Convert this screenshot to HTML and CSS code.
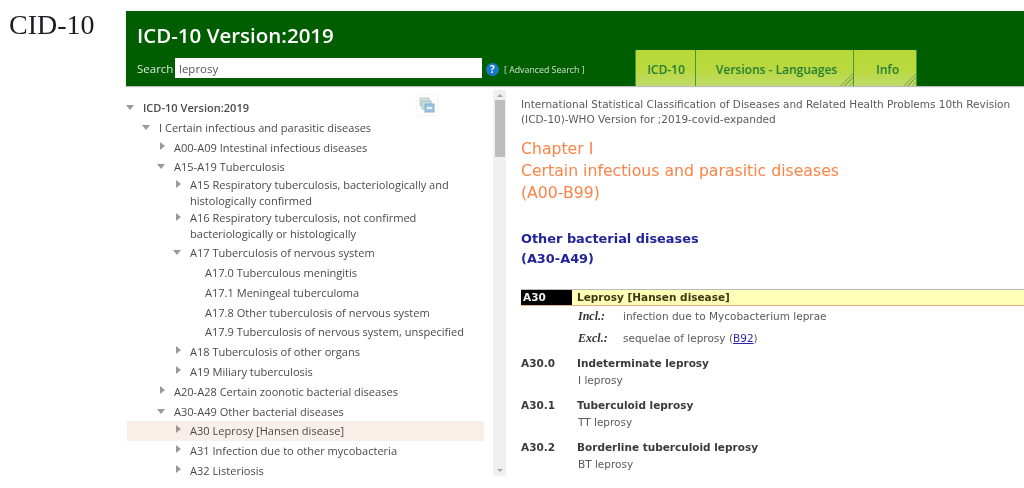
FILE: index.html
```html
<!DOCTYPE html>
<html lang="en">
<head>
  <meta charset="UTF-8" />
  <title>CID-10</title>
  <link rel="stylesheet" href="styles.css">
</head>
<body>
  <div class="page">
    <div class="page-label">CID-10</div>

    <div class="browser">
      <!-- Green header -->
      <div class="header">
        <h1>ICD-10 Version:2019</h1>
        <div class="header-bar">
          <div class="search">
            <label>Search</label>
            <input type="text" value="leprosy" />
            <span class="help">?</span>
            <a class="advanced">[ Advanced Search ]</a>
          </div>
          <div class="tabs">
            <a class="tab tab-icd">ICD-10</a>
            <a class="tab tab-versions">Versions - Languages</a>
            <a class="tab tab-info">Info</a>
          </div>
        </div>
      </div>

      <div class="panes">
        <!-- Tree -->
        <div class="tree">
          <div class="tree-copy">
            <svg width="20" height="20" viewBox="0 0 20 20">
              <rect x="3" y="3" width="9" height="8" fill="#d3e4d8" stroke="#b4cbc2" />
              <rect x="5" y="6" width="9" height="8" fill="#c6dde4" stroke="#a6c2d0" />
              <rect x="8" y="9" width="9" height="8" fill="#9cc6e4" stroke="#8aaac4" />
              <rect x="10" y="12" width="5" height="2" fill="#e8f2f8" />
            </svg>
          </div>
          <div class="row lvl-0 open"><i></i><span class="row-bold">ICD-10 Version:2019</span></div>
          <div class="row lvl-1 open"><i></i>I Certain infectious and parasitic diseases</div>
          <div class="row lvl-2 closed"><i></i>A00-A09 Intestinal infectious diseases</div>
          <div class="row lvl-2 open"><i></i>A15-A19 Tuberculosis</div>
          <div class="row lvl-3 closed wrap"><i></i>A15 Respiratory tuberculosis, bacteriologically and histologically confirmed</div>
          <div class="row lvl-3 closed wrap"><i></i>A16 Respiratory tuberculosis, not confirmed bacteriologically or histologically</div>
          <div class="row lvl-3 open"><i></i>A17 Tuberculosis of nervous system</div>
          <div class="row lvl-4">A17.0 Tuberculous meningitis</div>
          <div class="row lvl-4">A17.1 Meningeal tuberculoma</div>
          <div class="row lvl-4">A17.8 Other tuberculosis of nervous system</div>
          <div class="row lvl-4">A17.9 Tuberculosis of nervous system, unspecified</div>
          <div class="row lvl-3 closed"><i></i>A18 Tuberculosis of other organs</div>
          <div class="row lvl-3 closed"><i></i>A19 Miliary tuberculosis</div>
          <div class="row lvl-2 closed"><i></i>A20-A28 Certain zoonotic bacterial diseases</div>
          <div class="row lvl-2 open"><i></i>A30-A49 Other bacterial diseases</div>
          <div class="row lvl-3 closed selected"><i></i>A30 Leprosy [Hansen disease]</div>
          <div class="row lvl-3 closed"><i></i>A31 Infection due to other mycobacteria</div>
          <div class="row lvl-3 closed"><i></i>A32 Listeriosis</div>
        </div>

        <div class="scrollbar">
          <div class="scroll-up"></div>
          <div class="scroll-thumb"></div>
          <div class="scroll-down"></div>
        </div>

        <!-- Content -->
        <div class="content">
          <p class="intro">International Statistical Classification of Diseases and Related Health Problems 10th Revision (ICD-10)-WHO Version for ;2019-covid-expanded</p>
          <h2 class="chapter">Chapter I<br>Certain infectious and parasitic diseases<br>(A00-B99)</h2>
          <h3 class="block">Other bacterial diseases<br>(A30-A49)</h3>

          <div class="category">
            <div class="cat-code">A30</div>
            <div class="cat-title">Leprosy [Hansen disease]</div>
          </div>
          <div class="note"><b>Incl.:</b><span>infection due to Mycobacterium leprae</span></div>
          <div class="note"><b>Excl.:</b><span>sequelae of leprosy (<a href="#">B92</a>)</span></div>

          <div class="sub">
            <div class="sub-code">A30.0</div>
            <div class="sub-title">Indeterminate leprosy</div>
            <div class="sub-text">I leprosy</div>
          </div>
          <div class="sub">
            <div class="sub-code">A30.1</div>
            <div class="sub-title">Tuberculoid leprosy</div>
            <div class="sub-text">TT leprosy</div>
          </div>
          <div class="sub">
            <div class="sub-code">A30.2</div>
            <div class="sub-title">Borderline tuberculoid leprosy</div>
            <div class="sub-text">BT leprosy</div>
          </div>
        </div>
      </div>
    </div>
  </div>
</body>
</html>
```

FILE: styles.css
```css
* {
  margin: 0;
  padding: 0;
  box-sizing: border-box;
}

html, body {
  height: 100%;
  overflow: hidden;
  background: white;
}

.page {
  display: flex;
  height: 488px;
  filter: blur(0.45px);
}

.page-label {
  width: 126px;
  flex-shrink: 0;
  padding: 9px 0 0 9px;
  font-family: "Liberation Serif", serif;
  font-size: 28px;
  line-height: 32px;
  color: #1c1c24;
}

.browser {
  flex: 1;
  min-width: 0;
  padding-top: 11px;
}

/* Header */
.header {
  height: 75px;
  background: #005e00;
  padding: 10px 0 0 11px;
  box-shadow: 0 1px 1px #bbb;
  font-family: "Open Sans", sans-serif;
}

.header h1 {
  font-size: 20.5px;
  line-height: 28px;
  font-weight: 600;
  color: white;
}

.header-bar {
  display: flex;
  margin-top: 1px;
}

.search {
  display: flex;
  align-items: center;
  width: 498px;
  height: 36px;
  color: #d8e8d8;
  font-size: 11.5px;
}

.search label {
  width: 38px;
  flex-shrink: 0;
}

.search input {
  width: 307px;
  height: 20px;
  border: none;
  padding-left: 4px;
  font-family: "Open Sans", sans-serif;
  font-size: 11.5px;
  color: #555;
}

.help {
  width: 13px;
  height: 13px;
  margin: 3px 0 0 4px;
  border-radius: 50%;
  background: #1a78c8;
  color: white;
  font-size: 10px;
  font-weight: bold;
  line-height: 13px;
  text-align: center;
}

.advanced {
  margin: 3px 0 0 5px;
  font-size: 8.8px;
  color: #cfe0cf;
  white-space: nowrap;
}

.tabs {
  display: flex;
  height: 36px;
}

.tab {
  position: relative;
  display: flex;
  align-items: center;
  justify-content: center;
  padding-top: 2px;
  font-size: 12px;
  font-weight: 600;
  color: #1f8038;
  background: linear-gradient(#b8d838 0%, #b9d93e 55%, #c0db6a 100%);
  border-right: 1px solid #3e9a3a;
}

.tab-icd {
  width: 61px;
  padding-left: 1px;
  border-left: 1px solid #3e9a3a;
}

.tab-versions {
  width: 158px;
  padding-left: 4px;
}

.tab-info {
  width: 63px;
  padding-left: 5px;
}

/* folded corner hatch on the tabs */
.tab-versions::after, .tab-info::after {
  content: "";
  position: absolute;
  right: 0;
  bottom: 0;
  width: 13px;
  height: 13px;
  background: repeating-linear-gradient(135deg, #8fae4c 0 1px, transparent 1px 3px);
  clip-path: polygon(100% 0, 100% 100%, 0 100%);
}

/* Panes */
.panes {
  display: flex;
  height: 392px;
  padding-top: 4px;
}

.tree {
  position: relative;
  width: 366px;
  flex-shrink: 0;
  height: 388px;
  padding: 8px 0 0 1px;
  overflow: hidden;
  font-family: "Open Sans", sans-serif;
  font-size: 11.05px;
  color: #4a4a4a;
}

.tree-copy {
  position: absolute;
  top: 5px;
  left: 291px;
  width: 20px;
  height: 20px;
  box-shadow: 0 0 2px #e4e4e4;
}

.row {
  position: relative;
  width: 357px;
  height: 19.8px;
  line-height: 19.8px;
  white-space: nowrap;
}

.row-bold {
  font-weight: 600;
}

.row.wrap {
  height: 33px;
  padding-right: 30px;
  line-height: 16px;
  white-space: normal;
}

.row.selected {
  background: #f8efe8;
}

.row i {
  position: absolute;
  width: 0;
  height: 0;
  margin-top: 4px;
  border-style: solid;
  border-color: transparent;
}

.row.wrap i {
  margin-top: 3px;
}

.row.closed i {
  margin-left: -14px;
  border-width: 4px 0 4px 5px;
  border-left-color: #999;
}

.row.open i {
  margin-left: -17px;
  margin-top: 7px;
  border-width: 5px 4px 0 4px;
  border-top-color: #999;
}

.lvl-0 { padding-left: 16px; }
.lvl-1 { padding-left: 32px; }
.lvl-2 { padding-left: 47px; }
.lvl-3 { padding-left: 63px; }
.lvl-4 { padding-left: 78px; }

.scrollbar {
  display: flex;
  flex-direction: column;
  align-items: center;
  width: 13px;
  flex-shrink: 0;
  height: 386px;
  margin-left: 1px;
  background: #f0f0f0;
}

.scroll-up {
  margin: 4px 0 3px;
  border-style: solid;
  border-width: 0 3px 3px 3px;
  border-color: transparent transparent #a8a8a8 transparent;
}

.scroll-thumb {
  width: 10px;
  height: 57px;
  background: #bdbdbd;
}

.scroll-down {
  margin-top: auto;
  margin-bottom: 4px;
  border-style: solid;
  border-width: 3px 3px 0 3px;
  border-color: #a8a8a8 transparent transparent transparent;
}

/* Content */
.content {
  flex: 1;
  min-width: 0;
  padding: 7px 0 0 15px;
  overflow: hidden;
  font-family: "DejaVu Sans", sans-serif;
  font-size: 10.5px;
  color: #5a5a5a;
}

.intro {
  padding-right: 6px;
  line-height: 15px;
}

.chapter {
  margin-top: 11px;
  font-size: 15.7px;
  font-weight: normal;
  line-height: 21.8px;
  color: #fa8446;
}

.block {
  margin-top: 26px;
  font-size: 12.9px;
  font-weight: bold;
  line-height: 20px;
  color: #23239a;
}

.category {
  display: flex;
  height: 17px;
  margin-top: 20px;
  border-top: 1px solid #bbb;
  border-bottom: 1px solid #e0b080;
  font-weight: bold;
  line-height: 14px;
}

.cat-code {
  width: 51px;
  padding-left: 2px;
  background: black;
  color: #eee;
}

.cat-title {
  flex: 1;
  padding-left: 5px;
  background: #ffffb8;
  color: #3a3a10;
}

.note {
  display: flex;
  height: 22px;
  padding-left: 57px;
  line-height: 21px;
}

.note b {
  width: 45px;
  font-family: "Liberation Serif", serif;
  font-size: 12px;
  font-style: italic;
  color: #333;
}

.note a {
  color: #2a2aa8;
}

.sub {
  display: grid;
  grid-template-columns: 56px 1fr;
  margin-top: 5px;
  margin-bottom: 8px;
  line-height: 17px;
}

.sub-code, .sub-title {
  font-weight: bold;
  color: #3a3a3a;
}

.sub-text {
  grid-column: 2;
  padding-left: 1px;
}
```
